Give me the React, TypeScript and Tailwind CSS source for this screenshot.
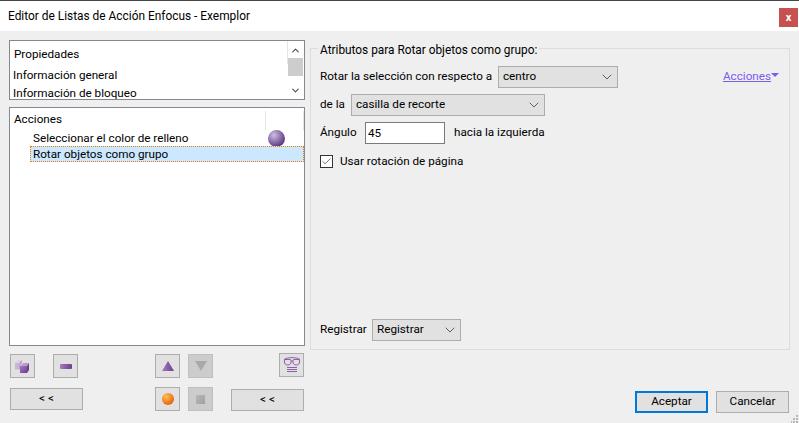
import { ChevronDown, ChevronUp, Check } from "lucide-react";

const font = { fontFamily: 'Roboto, "Noto Sans", sans-serif' };

function Select({ label, width }: { label: string; width: string }) {
  return (
    <div className={`${width} h-[22px] flex items-center justify-between bg-[#e1e1e1] border border-[#adadad] pl-[4px] pr-[2px] text-black`}>
      <span>{label}</span>
      <ChevronDown size={16} strokeWidth={1.4} className="text-[#555]" />
    </div>
  );
}

function IconButton({ disabled, children }: { disabled?: boolean; children: React.ReactNode }) {
  return (
    <div className={`w-[25px] h-[24px] flex items-center justify-center border ${disabled ? "bg-[#cccccc] border-[#bfbfbf]" : "bg-[#e1e1e1] border-[#adadad]"}`}>
      {children}
    </div>
  );
}

function WideButton({ label, primary }: { label: string; primary?: boolean }) {
  return (
    <div className={`w-[73px] h-[22px] flex items-center justify-center bg-[#e1e1e1] text-black ${primary ? "border-2 border-[#0078d7]" : "border border-[#adadad]"}`}>
      {label}
    </div>
  );
}

function Ball({ id, from, to, size }: { id: string; from: string; to: string; size: number }) {
  return (
    <svg width={size} height={size} viewBox="0 0 16 16">
      <defs>
        <radialGradient id={id} cx="0.35" cy="0.3" r="0.8">
          <stop offset="0" stopColor={from} />
          <stop offset="1" stopColor={to} />
        </radialGradient>
      </defs>
      <circle cx="8" cy="8" r="8" fill={`url(#${id})`} />
    </svg>
  );
}

export default function App() {
  return (
    <div className="relative w-[799px] h-[423px] flex flex-col bg-[#efefef] text-[11.7px] text-black overflow-hidden" style={font}>
      {/* title bar */}
      <div className="h-[31px] shrink-0 bg-white border-t border-[#444] flex items-start justify-between">
        <span className="mt-[7px] ml-[8px] leading-[16px] text-[11.9px]">Editor de Listas de Acción Enfocus - Exemplor</span>
        <div className="w-[19px] h-[19px] mt-[7px] mr-[1px] bg-[#c75050] flex items-center justify-center text-white font-bold text-[11px] leading-none">x</div>
      </div>

      <div className="flex flex-1 pl-[9px]">
        {/* left column */}
        <div className="w-[296px] flex flex-col pt-[9px]">
          <div className="h-[60px] bg-white border border-[#828790] flex overflow-hidden">
            <div className="flex-1 flex flex-col">
              <div className="h-[24px] pl-[4px] pt-[5px] leading-[16px]">Propiedades</div>
              <div className="pl-[3px] mt-[3px] leading-[18px] pt-[1px]">Información general</div>
              <div className="pl-[3px] leading-[18px]">Información de bloqueo</div>
            </div>
            <div className="w-[17px] flex flex-col items-center text-[#505050] relative">
              <div className="absolute left-0 top-0 h-[23px] border-l border-[#e5e5e5]" />
              <ChevronUp size={11} strokeWidth={2.5} className="mt-[4px]" />
              <div className="w-[15px] h-[18px] bg-[#cdcdcd] mt-[2px]" />
              <ChevronDown size={11} strokeWidth={2.5} className="mt-auto mb-[3px]" />
            </div>
          </div>

          <div className="h-[239px] mt-[7px] bg-white border border-[#828790] flex flex-col">
            <div className="h-[22px] flex justify-between pl-[4px] pt-[3px] leading-[16px]">
              <span>Acciones</span>
              <div className="w-[39px] border-l border-[#e5e5e5] border-r" />
            </div>
            <div className="h-[16px] flex items-center justify-between pl-[23px] pr-[19px]">
              <span className="pt-[1px]">Seleccionar el color de relleno</span>
              <Ball id="purple" from="#cdbfe0" to="#4f2478" size={17} />
            </div>
            <div className="h-[16px] ml-[20px] flex items-center pl-[2px] pt-[1px] bg-[#cce8ff] border border-dotted border-[#f07c00]">
              Rotar objetos como grupo
            </div>
          </div>

          {/* toolbar rows */}
          <div className="flex items-start mt-[8px] pl-[1px]">
            <IconButton>
              <svg width="15" height="15" viewBox="0 0 15 15">
                <defs>
                  <linearGradient id="cube" x1="0" y1="0" x2="1" y2="1">
                    <stop offset="0" stopColor="#a47cbd" />
                    <stop offset="1" stopColor="#6f3d90" />
                  </linearGradient>
                </defs>
                <path d="M0 4l3-3h4L4 4z" fill="#ddd0e4" />
                <path d="M0 4h4v6.5H0z" fill="#c9b5d4" />
                <path d="M4 4l3-3v3L5 6v4.5H4z" fill="#b9a2c8" />
                <path d="M5 7l3-3h6l-2 3z" fill="#b99ccb" />
                <path d="M5 7h7v7H5z" fill="url(#cube)" />
                <path d="M12 7l2-3v7l-2 3z" fill="#6f3d90" />
              </svg>
            </IconButton>
            <div className="ml-[18px]">
              <IconButton>
                <div className="w-[12px] h-[5px] bg-gradient-to-r from-[#a47cbd] to-[#6f3d90] rounded-[1px]" />
              </IconButton>
            </div>
            <div className="ml-[77px]">
              <IconButton>
                <svg width="12" height="10" viewBox="0 0 12 10">
                  <defs>
                    <linearGradient id="tri" x1="0" y1="0" x2="1" y2="0">
                      <stop offset="0" stopColor="#a47cbd" />
                      <stop offset="1" stopColor="#6f3d90" />
                    </linearGradient>
                  </defs>
                  <path d="M6 0l6 10H0z" fill="url(#tri)" />
                </svg>
              </IconButton>
            </div>
            <div className="ml-[8px]">
              <IconButton disabled>
                <svg width="12" height="10" viewBox="0 0 12 10"><path d="M0 0h12L6 10z" fill="#a9a9a9" /></svg>
              </IconButton>
            </div>
            <div className="ml-[66px] -mt-[1px]">
              <IconButton>
                <svg width="18" height="18" viewBox="0 0 18 18" fill="none" stroke="#8f5fab" strokeWidth="1">
                  <path d="M1 3.5C4 1 14 1 17 3.5" />
                  <path d="M1.5 3.5h5.5a1 1 0 0 1 1 1v1.5c0 1.5-1 3-3 3H4.5c-2 0-3-1.5-3-3z" />
                  <path d="M16.5 3.5H11a1 1 0 0 0-1 1v1.5c0 1.5 1 3 3 3h.5c2 0 3-1.5 3-3z" />
                  <path d="M8 5h2M4 11.5h10M4 13.5h10M4 15.5h10" />
                </svg>
              </IconButton>
            </div>
          </div>
          <div className="flex items-start mt-[9px] pl-[1px]">
            <div className="mt-[1px]"><WideButton label="< <" /></div>
            <div className="ml-[72px]">
              <IconButton>
                <Ball id="orange" from="#ffc04d" to="#e2570a" size={12} />
              </IconButton>
            </div>
            <div className="ml-[8px]">
              <IconButton disabled>
                <div className="w-[9px] h-[9px] bg-gradient-to-br from-[#b8b8b8] to-[#a0a0a0]" />
              </IconButton>
            </div>
            <div className="ml-[18px] mt-[2px]">
              <WideButton label="< <" />
            </div>
          </div>
        </div>

        {/* right column */}
        <div className="w-[480px] ml-[5px] flex flex-col pt-[17px]">
          <div className="relative h-[302px] border border-[#dcdcdc] pt-[17px] pl-[9px] pr-[10px] flex flex-col">
            <span className="absolute left-[7px] -top-[7px] px-[2px] bg-[#efefef] leading-[16px] text-[11.85px]">Atributos para Rotar objetos como grupo:</span>
            <div className="flex items-center">
              <span className="w-[172px] whitespace-nowrap">Rotar la selección con respecto a</span>
              <div className="ml-[6px]"><Select label="centro" width="w-[120px]" /></div>
              <span className="ml-auto text-[#7b5cf0] underline">Acciones</span>
              <svg width="8" height="4" viewBox="0 0 8 4" className="mb-[4px]"><path d="M0 0h8L4 4z" fill="#7b5cf0" /></svg>
            </div>
            <div className="flex items-center mt-[6px]">
              <span className="w-[25px]">de la</span>
              <div className="ml-[6px]"><Select label="casilla de recorte" width="w-[194px]" /></div>
            </div>
            <div className="flex items-center mt-[6px]">
              <span className="w-[39px]">Ángulo</span>
              <div className="ml-[6px] w-[80px] h-[22px] bg-white border border-[#7a7a7a] pl-[2px] leading-[20px]">45</div>
              <span className="ml-[9px]">hacia la izquierda</span>
            </div>
            <div className="flex items-center mt-[9px]">
              <div className="w-[13px] h-[13px] border border-[#333] bg-white flex items-center justify-center">
                <Check size={11} strokeWidth={1.5} className="text-[#333]" />
              </div>
              <span className="ml-[7px]">Usar rotación de página</span>
            </div>
            <div className="flex items-center mt-auto mb-[8px]">
              <span className="w-[46px]">Registrar</span>
              <div className="ml-[6px]"><Select label="Registrar" width="w-[89px]" /></div>
            </div>
          </div>
          <div className="flex justify-end gap-[8px] mt-[41px] pr-[1px]">
            <WideButton label="Aceptar" primary />
            <WideButton label="Cancelar" />
          </div>
        </div>
      </div>

      {/* resize grip */}
      <svg width="8" height="8" viewBox="0 0 8 8" className="absolute right-0 bottom-0" fill="#b8b8b8">
        <rect x="5" y="0" width="2" height="2" />
        <rect x="2" y="3" width="2" height="2" />
        <rect x="5" y="3" width="2" height="2" />
        <rect x="-1" y="6" width="2" height="2" />
        <rect x="2" y="6" width="2" height="2" />
        <rect x="5" y="6" width="2" height="2" />
      </svg>
    </div>
  );
}
